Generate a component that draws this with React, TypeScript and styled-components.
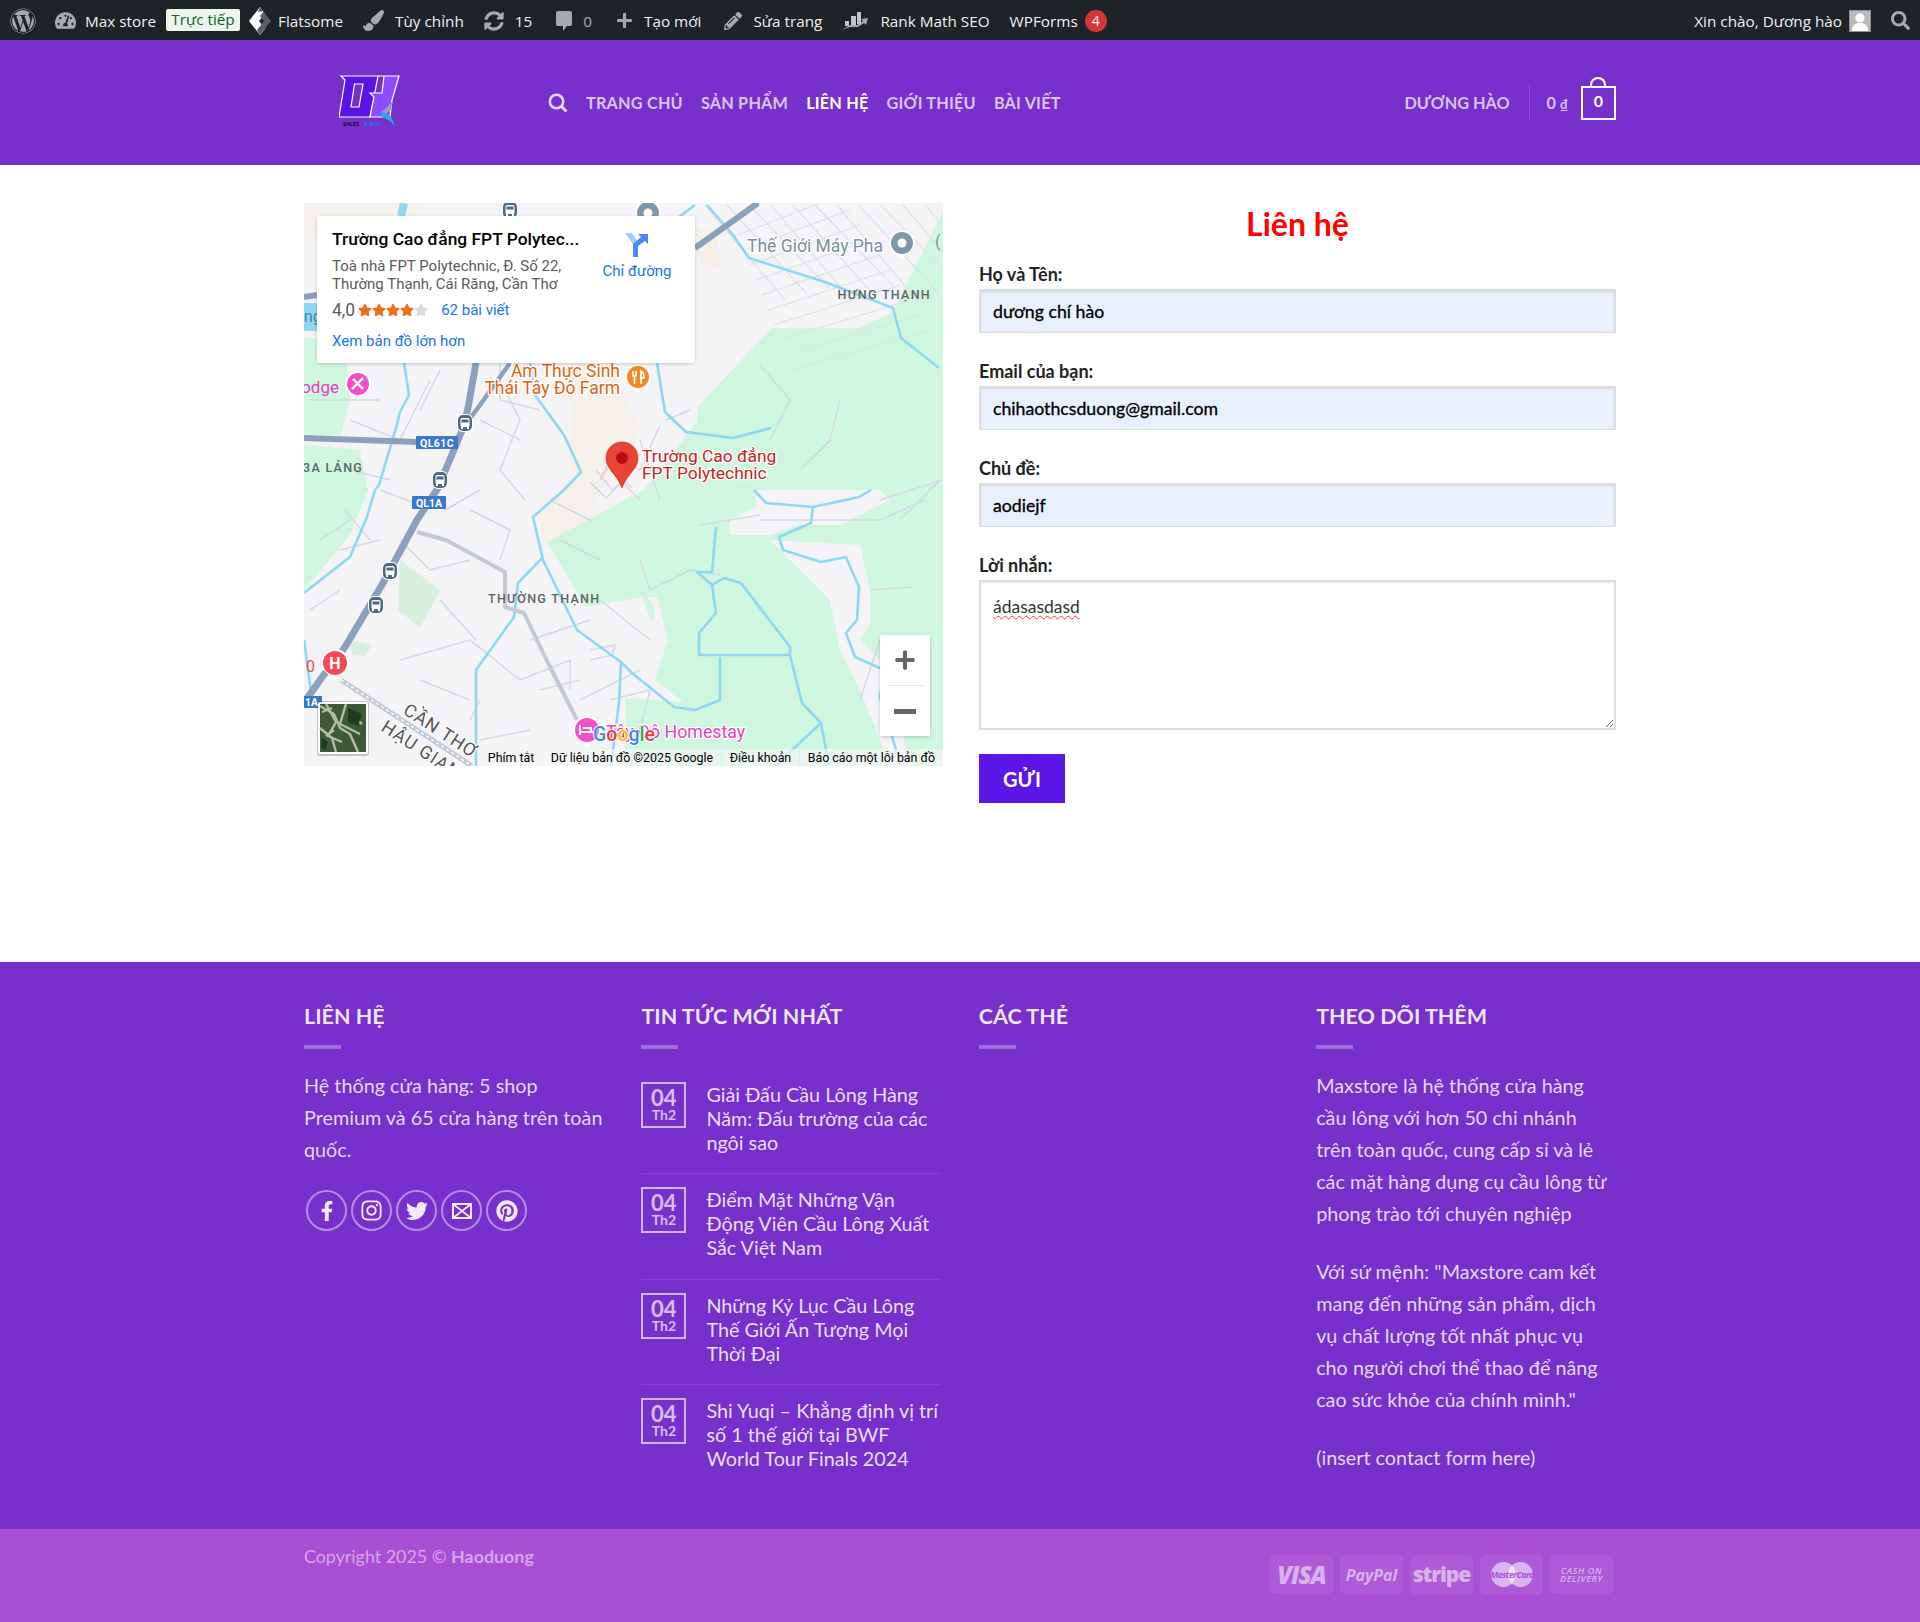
import React from 'react';
import styled, { createGlobalStyle } from 'styled-components';
import { FaFacebookF, FaInstagram, FaPinterest, FaPlus, FaSearch, FaStar, FaSyncAlt, FaTachometerAlt, FaTwitter, FaWordpress, FaPaintBrush, FaPencilAlt } from 'react-icons/fa';

const GlobalStyle = createGlobalStyle`
  html, body { margin: 0; padding: 0; background: #fff; }
  body { font-family: Lato, "Noto Sans", sans-serif; color: #333; }
  * { box-sizing: border-box; }
`;

const NEWS = [
  'Giải Đấu Cầu Lông Hàng Năm: Đấu trường của các ngôi sao',
  'Điểm Mặt Những Vận Động Viên Cầu Lông Xuất Sắc Việt Nam',
  'Những Kỷ Lục Cầu Lông Thế Giới Ấn Tượng Mọi Thời Đại',
  'Shi Yuqi – Khẳng định vị trí số 1 thế giới tại BWF World Tour Finals 2024',
];

const NAV = ['Trang chủ', 'Sản phẩm', 'Liên hệ', 'Giới thiệu', 'Bài viết'];

const RIVERS = [
  '564,490 533,517 543,560 577,630 621,662 619,703 611,766',
  '543,557 518,583 514,617 476,670 476,766',
  '754,490 766,503 813,507 859,497 871,490',
  '813,507 811,523 779,537 783,550 821,562 846,557 859,587 857,620 846,633 855,657 884,670 880,697 901,766',
  '716,527 712,572 697,572 712,585 716,613 699,633 699,655 790,655 790,647 741,583 724,578 712,585',
  '790,655 802,703 821,723 829,766',
  '720,657 720,700 695,710 674,707 632,673 621,662',
  '821,723 775,766',
  '657,363 665,412 686,432 733,438 771,428',
  '707,205 733,235 749,258 825,282 893,308 901,338 939,368',
  '530,363 535,395 564,435 581,472 564,490',
  '404,363 409,395 400,412 396,428 388,455 379,485 375,490 367,517 350,557 304,593',
  '304,640 312,700',
  '640,203 668,225 695,205',
];

const STREETS = [
  '660,425 640,470 612,455 600,480', '610,470 640,500', '620,450 600,480', '640,440 660,500',
  '596,470 612,490 630,475', '606,462 632,488', '590,482 606,498 622,482',
  '500,380 520,420 500,470 525,500', '480,420 520,440', '380,490 420,505', '400,540 430,570 470,560',
  '470,510 510,530 500,560', '440,600 476,640', '530,640 590,620', '520,680 570,660 570,690',
  '400,660 470,640 520,680', '470,700 420,680', '550,500 590,520', '560,540 600,560',
  '640,560 650,590 690,570 720,575', '840,400 830,440 800,470', '760,520 880,520 925,500',
  '870,590 913,587', '940,480 900,520', '760,365 790,400 770,440', '880,640 860,700', '580,700 640,670',
  '340,550 380,540', '345,510 370,540', '310,610 340,590', '430,380 400,440 350,420', '310,400 380,400',
  '480,740 530,730', '600,600 650,640', '590,650 615,645 612,655 590,660', '480,700 470,720',
  '440,370 420,410', '500,363 500,400 540,410', '350,470 390,480', '320,540 350,520', '445,510 480,490',
  '540,690 580,680', '610,700 650,690 640,730', '666,420 690,410', '700,525 760,515', '880,500 943,480',
];

// the dense street blocks of the town in the map's top right corner
const TOWN = Array.from({ length: 11 }, (_, i) => {
  const x = 705 + i * 22;
  return `${x},205 ${x + 80},${300 - (i % 3) * 6}`;
}).concat(
  Array.from({ length: 10 }, (_, i) => {
    const y = 235 + i * 15;
    return `${738 + i * 6},${y} ${840 + i * 10},${y - 40}`;
  }),
);

const BusPin: React.FC<{ x: number; y: number }> = ({ x, y }) => (
  <g transform={`translate(${x} ${y})`}>
    <rect x={-8} y={-9} width={16} height={18} rx={6} fill="#fff" />
    <rect x={-7} y={-8} width={14} height={16} rx={5} fill="#4f6a80" />
    <rect x={-4.5} y={-5} width={9} height={9} rx={1.5} fill="#fff" />
    <rect x={-3.5} y={-3.5} width={7} height={3} fill="#4f6a80" />
    <rect x={-4} y={4} width={2} height={2} fill="#fff" />
    <rect x={2} y={4} width={2} height={2} fill="#fff" />
  </g>
);

const CirclePin: React.FC<{ x: number; y: number; color: string; r?: number; children?: React.ReactNode }> = ({ x, y, color, r = 12, children }) => (
  <g transform={`translate(${x} ${y})`}>
    <path d={`M${-r - 2} 0a${r + 2} ${r + 2} 0 1 1 ${2 * r + 4} 0c0 ${r * 0.6} -${r * 0.6} ${r * 0.7} -${r + 2} ${r * 1.3 + 2}c-${r * 0.4} -${r * 0.6} -${r + 2} -${r * 0.7} -${r + 2} -${r * 1.3 + 2}z`} fill="#fff" />
    <circle r={r} fill={color} />
    {children}
  </g>
);

const MapDrawing = () => (
  <MapSvg viewBox="304 203 639 563" xmlns="http://www.w3.org/2000/svg">
    <rect x={304} y={203} width={639} height={563} fill="#f4f3f5" />
    <polygon points="695,228 716,232 722,270 700,262" fill="#f5f0e6" />
    <polygon points="304,203 420,203 400,240 304,240" fill="#f5f0e6" opacity={0.6} />
    <polygon points="570,363 610,363 640,430 600,490 585,520 545,545 535,510 570,480" fill="#f5f0e6" opacity={0.7} />
    <path d="M644,490 L697,422 L697,408 L771,328 L859,328 L893,312 L901,295 L926,245 L943,212 L943,766 L625,766 L625,698 L684,702 L644,672 L657,637 L642,597 L585,607 L564,570 L547,542 Z" fill="#cff6df" />
    <polygon points="304,338 345,338 350,400 341,435 304,435" fill="#cff6df" />
    <polygon points="304,445 360,450 368,490 350,535 304,590" fill="#cff6df" />
    <polygon points="400,560 440,590 420,628 398,610" fill="#d7f0dd" />
    <polygon points="350,640 372,645 365,656 352,655" fill="#d7f0dd" />
    <polygon points="754,490 880,490 890,500 840,525 790,525 760,520" fill="#f4f3f5" />
    <path d="M770,540 L860,545 L870,590 L870,625 L860,640 L885,665 L895,700 L910,766 L890,766 L860,690 L840,650 L830,600 L800,570 Z" fill="#f4f3f5" />
    <path d="M730,520 L760,505 L800,525 L770,535 L730,535 Z" fill="#f4f3f5" />
    <polygon points="655,610 648,597 657,597 668,640 655,680 640,680" fill="#f4f3f5" />
    {TOWN.map((s) => (
      <polyline key={s} points={s} fill="none" stroke="#dde1e9" strokeWidth={1.2} />
    ))}
    {STREETS.map((s) => (
      <polyline key={s} points={s} fill="none" stroke="#d3d9e3" strokeWidth={1.5} />
    ))}
    {RIVERS.map((s) => (
      <polyline key={s} points={s} fill="none" stroke="#8ed8f2" strokeWidth={2.6} strokeLinejoin="round" />
    ))}
    <rect x={304} y={303} width={14} height={28} fill="#8ed8f2" />
    <polyline points="304,297 317,295" fill="none" stroke="#8aa0bd" strokeWidth={6} />
    <polyline points="404,203 401,216" fill="none" stroke="#8ed8f2" strokeWidth={8} />
    <polyline points="417,532 446,540 505,572 505,607 524,613 548,663 577,720" fill="none" stroke="#c2cad6" strokeWidth={4} strokeLinejoin="round" />
    <polyline points="341,680 472,766" fill="none" stroke="#c2cad6" strokeWidth={5} />
    <polyline points="341,680 472,766" fill="none" stroke="#fff" strokeWidth={1.5} strokeDasharray="3 3" />
    <polyline points="758,203 695,248" fill="none" stroke="#8aa0bd" strokeWidth={6} />
    <polyline points="476,363 468,408 463,428 438,488 417,520 383,583 345,647 320,680 304,703" fill="none" stroke="#8aa0bd" strokeWidth={7} strokeLinejoin="round" />
    <polyline points="510,363 480,405 463,428" fill="none" stroke="#8aa0bd" strokeWidth={4.5} />
    <polyline points="304,438 417,442 451,443" fill="none" stroke="#8aa0bd" strokeWidth={6} />
    <rect x={416} y={436} width={42} height={13} rx={1} fill="#3a78c9" />
    <MapLabel x={437} y={446.5} fontSize={10.5} fontWeight={700} letterSpacing={0.4} fill="#fff" textAnchor="middle">QL61C</MapLabel>
    <rect x={412} y={496} width={34} height={13} rx={1} fill="#3a78c9" />
    <MapLabel x={429} y={506.5} fontSize={10.5} fontWeight={700} fill="#fff" textAnchor="middle">QL1A</MapLabel>
    <rect x={304} y={696} width={18} height={12} fill="#3a78c9" />
    <MapLabel x={305} y={706} fontSize={10.5} fontWeight={700} fill="#fff">1A</MapLabel>
    <BusPin x={510} y={210} />
    <BusPin x={465} y={423} />
    <BusPin x={440} y={480} />
    <BusPin x={390} y={571} />
    <BusPin x={376} y={605} />
    <CirclePin x={648} y={213} color="#7f98a8" r={11}><circle r={4.5} fill="#fff" /></CirclePin>
    <CirclePin x={902} y={243} color="#7f98a8" r={11}><circle r={4.5} fill="#fff" /></CirclePin>
    <CirclePin x={638} y={377} color="#f08a24" r={11}>
      <path d="M-5 -6v5h3v-5M-3.5 -1v8M3 7V-6c2 1 3 3 3 7H3" fill="none" stroke="#fff" strokeWidth={1.6} />
    </CirclePin>
    <CirclePin x={358} y={384} color="#f44fc8" r={11}>
      <path d="M-6 5L5 -6M-5 -5L5 5" stroke="#fff" strokeWidth={2.4} />
    </CirclePin>
    <CirclePin x={335} y={663} color="#ef4a5a" r={12}>
      <MapLabel x={0} y={6} fontSize={16} fontWeight={700} fill="#fff" textAnchor="middle">H</MapLabel>
    </CirclePin>
    <CirclePin x={587} y={730} color="#f44fc8" r={12}>
      <path d="M-7 -5v10M-7 2h14v3M-4 -2h8v4" stroke="#fff" strokeWidth={2} fill="none" />
    </CirclePin>
    <path d="M622 442c-9 0-16 7-16 16 0 11 11 16 16 30 5-14 16-19 16-30 0-9-7-16-16-16z" fill="#ea4335" stroke="#c5221f" strokeWidth={0.6} />
    <circle cx={622} cy={458} r={6} fill="#b31412" />
    <MapLabel x={883} y={252} fontSize={17.5} fill="#78909c" textAnchor="end" stroke="#fff" strokeWidth={2.4} paintOrder="stroke">Thế Giới Máy Pha</MapLabel>
    <MapLabel x={931} y={299} fontSize={12.5} fontWeight={500} letterSpacing={1.3} fill="#5f6368" textAnchor="end">HƯNG THẠNH</MapLabel>
    <MapLabel x={620} y={377} fontSize={17.5} fill="#d9650f" textAnchor="end" stroke="#fff" strokeWidth={2.4} paintOrder="stroke">Ẩm Thực Sinh</MapLabel>
    <MapLabel x={620} y={394} fontSize={17.5} fill="#d9650f" textAnchor="end" stroke="#fff" strokeWidth={2.4} paintOrder="stroke">Thái Tây Đô Farm</MapLabel>
    <MapLabel x={339} y={393} fontSize={17} fill="#e040c0" textAnchor="end">odge</MapLabel>
    <MapLabel x={642} y={462} fontSize={17.4} fill="#c5221f" stroke="#fff" strokeWidth={2.4} paintOrder="stroke">Trường Cao đẳng</MapLabel>
    <MapLabel x={642} y={479} fontSize={17.4} fill="#c5221f" stroke="#fff" strokeWidth={2.4} paintOrder="stroke">FPT Polytechnic</MapLabel>
    <MapLabel x={303} y={472} fontSize={12.5} fontWeight={500} letterSpacing={1.3} fill="#5f6368">3A LÁNG</MapLabel>
    <MapLabel x={488} y={603} fontSize={12.5} fontWeight={500} letterSpacing={1.3} fill="#5f6368">THƯỜNG THẠNH</MapLabel>
    <MapLabel x={306} y={672} fontSize={16} fill="#ef4a5a">0</MapLabel>
    <MapLabel x={935} y={247} fontSize={16} fill="#78909c">(</MapLabel>
    <MapLabel x={304} y={322} fontSize={16} fill="#2f8fa0">ng</MapLabel>
    <MapLabel transform="translate(402 713) rotate(33)" fontSize={18} letterSpacing={1} fill="#555" stroke="#fff" strokeWidth={2} paintOrder="stroke">CẦN THƠ</MapLabel>
    <MapLabel transform="translate(380 730) rotate(33)" fontSize={18} letterSpacing={1} fill="#555" stroke="#fff" strokeWidth={2} paintOrder="stroke">HẬU GIANG</MapLabel>
    <MapLabel x={606} y={738} fontSize={17.8} fill="#e83fbf" stroke="#fff" strokeWidth={2} paintOrder="stroke">Tây Đô Homestay</MapLabel>
    <MapLabel x={593} y={741} fontSize={19.5} fontWeight={500} stroke="#fff" strokeWidth={1.5} paintOrder="stroke">
      <tspan fill="#4285f4">G</tspan><tspan fill="#ea4335">o</tspan><tspan fill="#fbbc05">o</tspan><tspan fill="#4285f4">g</tspan><tspan fill="#34a853">l</tspan><tspan fill="#ea4335">e</tspan>
    </MapLabel>
    <rect x={317} y={701} width={52} height={55} rx={3} fill="#000" opacity={0.2} />
    <rect x={318} y={702} width={50} height={52} rx={2} fill="#fff" />
    <rect x={320} y={704} width={46} height={48} fill="#3d5a36" />
    <path d="M320 706l14 8 6 14 10 6 8 18M326 704l10 18-8 14 14 6M346 704l-6 20 20 10M320 728l12 10 4 14M322 712l10-4M334 730l-8 6M352 716l10 8" stroke="#b4bca3" strokeWidth={2.4} fill="none" />
    <path d="M348 708l14 6-4 12-10-4zM322 738l6 4-2 8-5-2z" fill="#1d3a1f" />
  </MapSvg>
);

const App = () => (
  <>
    <GlobalStyle />
    <AdminBar>
      <AdminGroup>
        <AdminItem><FaWordpress size={26} /></AdminItem>
        <AdminItem $left={9}><FaTachometerAlt size={21} /><span>Max store</span></AdminItem>
        <LiveBadge>Trực tiếp</LiveBadge>
        <AdminItem $left={8} $gap={6}>
          <svg width="24" height="30" viewBox="0 0 24 30">
            <path d="M12 1L1 15l11 14 5-6-6-8 6-7z" fill="#fff" />
            <path d="M12 1l11 14-11 14-3-5 7-9-4-5 4-5-6 1z" fill="#5b5f63" />
          </svg>
          <span>Flatsome</span>
        </AdminItem>
        <AdminItem $gap={11}><FaPaintBrush size={21} /><span>Tùy chỉnh</span></AdminItem>
        <AdminItem $gap={11}><FaSyncAlt size={20} /><span>15</span></AdminItem>
        <AdminItem $left={13} $gap={10}>
          <svg width="18" height="22" viewBox="0 0 18 22"><path d="M1 3a2 2 0 0 1 2-2h12a2 2 0 0 1 2 2v11a2 2 0 0 1-2 2h-3l-4 5v-5H3a2 2 0 0 1-2-2z" fill="#a7aaad" /></svg>
          <Muted>0</Muted>
        </AdminItem>
        <AdminItem $left={14} $gap={11}><FaPlus size={17} /><span>Tạo mới</span></AdminItem>
        <AdminItem $left={13} $gap={11}><FaPencilAlt size={18} /><span>Sửa trang</span></AdminItem>
        <AdminItem $gap={12}>
          <svg width="26" height="20" viewBox="0 0 26 20">
            <path d="M3 15h4V10H3zM9 14h5V5H9zM15 13h4V1h-4z" fill="#c3c4c7" />
            <path d="M0 19l8-3h8l6-4 2 2 2-7-7 1 2 2-6 4H8z" fill="#a7aaad" />
          </svg>
          <span>Rank Math SEO</span>
        </AdminItem>
        <AdminItem $gap={7}><span>WPForms</span><CountBadge>4</CountBadge></AdminItem>
      </AdminGroup>
      <AdminGroup>
        <AdminItem $gap={7}>
          <span>Xin chào, Dương hào</span>
          <Avatar>
            <svg width="20" height="20" viewBox="0 0 20 20">
              <circle cx="10" cy="7" r="4.6" fill="#fff" />
              <path d="M2 20c0-6 3-8 8-8s8 2 8 8z" fill="#fff" />
            </svg>
          </Avatar>
        </AdminItem>
        <AdminItem><FaSearch size={19} /></AdminItem>
      </AdminGroup>
    </AdminBar>

    <Header>
      <HeaderInner>
        <Logo viewBox="0 0 62 52" xmlns="http://www.w3.org/2000/svg">
          <polygon points="2,1 39,1 31,42 0,42 6,5" fill="#5a14e8" stroke="#fff" strokeWidth={1.2} />
          <polygon points="15.5,9 24,9 20,32 12,32" fill="#7830cc" stroke="#fff" strokeWidth={1.2} />
          <polygon points="39,1 60,1 53,25 51,42 31,42 35,22 31,18 43,18 45,1" fill="#8a4dff" stroke="#fff" strokeWidth={1.2} />
          <path d="M42 38l12-12-2 9-8 6z" fill="#9a9bb5" />
          <path d="M42 37c7 1 12 5 14 15-3-6-8-8-13-10z" fill="#2ea6dd" />
          <text x="4" y="51" fontFamily="Lato" fontSize="5.5" fontWeight="900" fill="#14082e">SALES</text>
          <text x="25" y="51" fontFamily="Lato" fontSize="5.5" fontWeight="900" fill="#2a7fd0">&amp; BUY</text>
        </Logo>
        <Nav>
          <SearchIcon width="20" height="20" viewBox="0 0 20 20">
            <circle cx="8.5" cy="8.5" r="6.7" fill="none" stroke="currentColor" strokeWidth="2.6" />
            <path d="M13.5 13.5L18.5 18.5" stroke="currentColor" strokeWidth="3" />
          </SearchIcon>
          {NAV.map((n) => (
            <NavLink key={n} $active={n === 'Liên hệ'}>{n}</NavLink>
          ))}
        </Nav>
        <Account>Dương Hào</Account>
        <Divider />
        <CartTotal>0 <small>₫</small></CartTotal>
        <Bag>
          <BagHandle />
          0
        </Bag>
      </HeaderInner>
    </Header>

    <Main>
      <MapFrame>
        <MapDrawing />
        <InfoCard>
          <CardInfo>
            <CardTitle>Trường Cao đẳng FPT Polytec...</CardTitle>
            <CardAddress>Toà nhà FPT Polytechnic, Đ. Số 22,<br />Thường Thạnh, Cái Răng, Cần Thơ</CardAddress>
            <Rating>
              <span>4,0</span>
              <Stars>
                {[1, 2, 3, 4, 5].map((i) => (
                  <FaStar key={i} size={14} color={i < 5 ? '#e7711b' : '#dadada'} />
                ))}
              </Stars>
              <CardLink>62 bài viết</CardLink>
            </Rating>
            <CardLink>Xem bản đồ lớn hơn</CardLink>
          </CardInfo>
          <Directions>
            <svg width="24" height="26" viewBox="0 0 24 26">
              <path d="M0 1h7l6 9v15H8V12z" fill="#a9c8fb" />
              <path d="M8 25V12L16 5l-3-3h10v10l-3-3-7 5v11z" fill="#4a8af4" />
            </svg>
            <CardLink>Chỉ đường</CardLink>
          </Directions>
        </InfoCard>
        <ZoomControl>
          <ZoomButton><FaPlus size={22} /></ZoomButton>
          <ZoomRule />
          <ZoomButton><MinusBar /></ZoomButton>
        </ZoomControl>
        <Attribution>
          <AttrText>Phím tắt</AttrText>
          <AttrText>Dữ liệu bản đồ ©2025 Google</AttrText>
          <AttrText>Điều khoản</AttrText>
          <AttrText>Báo cáo một lỗi bản đồ</AttrText>
        </Attribution>
      </MapFrame>

      <ContactForm>
        <FormTitle>Liên hệ</FormTitle>
        <Field>
          <Label>Họ và Tên:</Label>
          <Input defaultValue="dương chí hào" />
        </Field>
        <Field>
          <Label>Email của bạn:</Label>
          <Input defaultValue="chihaothcsduong@gmail.com" />
        </Field>
        <Field>
          <Label>Chủ đề:</Label>
          <Input defaultValue="aodiejf" />
        </Field>
        <Field>
          <Label>Lời nhắn:</Label>
          <MessageBox><Misspelled>ádasasdasd</Misspelled></MessageBox>
        </Field>
        <SubmitButton type="button">Gửi</SubmitButton>
      </ContactForm>
    </Main>

    <Footer>
      <FooterGrid>
        <div>
          <FooterHeading>Liên hệ</FooterHeading>
          <FooterText>Hệ thống cửa hàng: 5 shop Premium và 65 cửa hàng trên toàn quốc.</FooterText>
          <Socials>
            <SocialCircle><FaFacebookF size={20} /></SocialCircle>
            <SocialCircle><FaInstagram size={23} /></SocialCircle>
            <SocialCircle><FaTwitter size={22} /></SocialCircle>
            <SocialCircle>
              <svg width="20" height="16" viewBox="0 0 20 16">
                <rect x="1" y="1" width="18" height="14" fill="none" stroke="currentColor" strokeWidth="2" />
                <path d="M1 1l18 14M19 1L1 15" stroke="currentColor" strokeWidth="1.6" />
              </svg>
            </SocialCircle>
            <SocialCircle><FaPinterest size={22} /></SocialCircle>
          </Socials>
        </div>
        <div>
          <FooterHeading>Tin tức mới nhất</FooterHeading>
          {NEWS.map((title) => (
            <NewsItem key={title}>
              <DateBox><strong>04</strong><span>Th2</span></DateBox>
              <NewsTitle>{title}</NewsTitle>
            </NewsItem>
          ))}
        </div>
        <div>
          <FooterHeading>Các thẻ</FooterHeading>
        </div>
        <div>
          <FooterHeading>Theo dõi thêm</FooterHeading>
          <FooterText>Maxstore là hệ thống cửa hàng cầu lông với hơn 50 chi nhánh trên toàn quốc, cung cấp sỉ và lẻ các mặt hàng dụng cụ cầu lông từ phong trào tới chuyên nghiệp</FooterText>
          <FooterText>Với sứ mệnh: "Maxstore cam kết mang đến những sản phẩm, dịch vụ chất lượng tốt nhất phục vụ cho người chơi thể thao để nâng cao sức khỏe của chính mình."</FooterText>
          <FooterText>(insert contact form here)</FooterText>
        </div>
      </FooterGrid>
    </Footer>

    <BottomBar>
      <BottomInner>
        <Copyright>Copyright 2025 © <strong>Haoduong</strong></Copyright>
        <Payments>
          <PayCard><Visa>VISA</Visa></PayCard>
          <PayCard><PayPal>PayPal</PayPal></PayCard>
          <PayCard><Stripe>stripe</Stripe></PayCard>
          <PayCard>
            <MasterCard>
              <i /><i />
              <em>MasterCard</em>
            </MasterCard>
          </PayCard>
          <PayCard><Cash>CASH ON<br />DELIVERY</Cash></PayCard>
        </Payments>
      </BottomInner>
    </BottomBar>
  </>
);

const AdminBar = styled.div`
  height: 40px;
  background: #1d2327;
  display: flex;
  justify-content: space-between;
  font-family: 'Open Sans', sans-serif;
  font-size: 15.3px;
  color: #f0f0f1;
`;

const AdminGroup = styled.div`
  display: flex;
  align-items: center;
`;

const AdminItem = styled.div<{ $gap?: number; $left?: number }>`
  display: flex;
  align-items: center;
  gap: ${({ $gap }) => $gap ?? 9}px;
  padding: 1px 10px 0 ${({ $left }) => $left ?? 10}px;
  height: 40px;
  color: #f0f0f1;
  white-space: nowrap;

  svg {
    color: #a7aaad;
    flex: none;
  }
`;

const Muted = styled.span`
  color: #a7aaad;
`;

const LiveBadge = styled.span`
  width: 74px;
  height: 22px;
  line-height: 21px;
  text-align: center;
  background: #ecf6ec;
  color: #0b5d2c;
  border-radius: 2px;
  white-space: nowrap;
`;

const CountBadge = styled.span`
  width: 22px;
  height: 22px;
  line-height: 22px;
  border-radius: 50%;
  background: #d63638;
  color: #fff;
  text-align: center;
  font-size: 14px;
`;

const Avatar = styled.span`
  width: 22px;
  height: 22px;
  background: #b9b9b9;
  border: 1px solid #8c8f94;
  display: flex;
  align-items: flex-end;
  justify-content: center;
  overflow: hidden;

  svg {
    color: #fff;
  }
`;

const Header = styled.header`
  height: 125px;
  background: #7830cc;
`;

const HeaderInner = styled.div`
  width: 1312px;
  height: 100%;
  margin: 0 auto;
  display: flex;
  align-items: center;
  padding-left: 35px;
  color: rgba(255, 255, 255, 0.8);
`;

const Logo = styled.svg`
  width: 62px;
  height: 52px;
  flex: none;
  margin-bottom: 4px;
`;

const Nav = styled.nav`
  display: flex;
  align-items: center;
  gap: 18px;
  margin-left: 147px;
  flex: 1;
`;

const SearchIcon = styled.svg`
  color: rgba(255, 255, 255, 0.8);
`;

const NavLink = styled.a<{ $active?: boolean }>`
  font-size: 16.25px;
  font-weight: 700;
  letter-spacing: 0.2px;
  text-transform: uppercase;
  color: ${({ $active }) => ($active ? '#fff' : 'rgba(255, 255, 255, 0.72)')};
  white-space: nowrap;
`;

const Account = styled.span`
  font-size: 16.25px;
  font-weight: 700;
  text-transform: uppercase;
  color: rgba(255, 255, 255, 0.72);
`;

const Divider = styled.span`
  width: 1px;
  height: 37px;
  margin: 0 17px 0 19px;
  background: rgba(255, 255, 255, 0.15);
`;

const CartTotal = styled.span`
  font-size: 16.25px;
  font-weight: 700;
  color: rgba(255, 255, 255, 0.72);
  margin-right: 13px;

  small {
    font-size: 13px;
    text-decoration: underline;
  }
`;

const Bag = styled.span`
  position: relative;
  width: 35px;
  height: 34px;
  margin-top: 1px;
  border: 2.5px solid #fff;
  color: #fff;
  font-size: 16px;
  font-weight: 700;
  text-align: center;
  line-height: 25px;
`;

const BagHandle = styled.i`
  position: absolute;
  left: 7px;
  top: -11px;
  width: 16px;
  height: 9px;
  border: 2px solid #fff;
  border-bottom: 0;
  border-radius: 9px 9px 0 0;
`;

const Main = styled.main`
  width: 1312px;
  height: 797px;
  margin: 0 auto;
  padding-top: 38px;
  display: grid;
  grid-template-columns: 639px 1fr;
  column-gap: 36px;
  align-items: start;
`;

const MapFrame = styled.div`
  position: relative;
  height: 563px;
  overflow: hidden;
  font-family: Roboto, sans-serif;
`;

const MapSvg = styled.svg`
  display: block;
  width: 639px;
  height: 563px;
`;

const MapLabel = styled.text`
  font-family: Roboto, sans-serif;
`;

const InfoCard = styled.div`
  position: absolute;
  left: 13px;
  top: 13px;
  width: 378px;
  height: 147px;
  padding: 13px 15px;
  background: #fff;
  border-radius: 2px;
  box-shadow: rgba(0, 0, 0, 0.3) 0 1px 4px -1px;
  display: flex;
  justify-content: space-between;
`;

const CardInfo = styled.div`
  width: 260px;
`;

const CardTitle = styled.div`
  font-size: 17.4px;
  font-weight: 500;
  line-height: 20px;
  margin-bottom: 8px;
  color: #000;
  white-space: nowrap;
`;

const CardAddress = styled.div`
  font-size: 15px;
  line-height: 18px;
  color: #5b5b5b;
  white-space: nowrap;
`;

const Rating = styled.div`
  display: flex;
  align-items: center;
  margin-top: 7px;
  height: 20px;
  font-size: 17.5px;
  color: #5b5b5b;
`;

const Stars = styled.span`
  display: flex;
  margin: 0 13px 0 3px;
`;

const CardLink = styled.a`
  font-size: 15px;
  color: #1a73e8;
  white-space: nowrap;
  display: block;
  line-height: 20px;

  ${Rating} + & {
    margin-top: 11px;
  }
`;

const Directions = styled.div`
  width: 70px;
  margin-right: 8px;
  padding-top: 3px;
  display: flex;
  flex-direction: column;
  align-items: center;
  gap: 3px;
`;

const ZoomControl = styled.div`
  position: absolute;
  left: 576px;
  top: 432px;
  width: 50px;
  height: 101px;
  background: #fff;
  box-shadow: rgba(0, 0, 0, 0.3) 0 1px 4px -1px;
  display: flex;
  flex-direction: column;
  align-items: center;
`;

const ZoomButton = styled.div`
  flex: 1;
  width: 100%;
  display: flex;
  align-items: center;
  justify-content: center;
  color: #666;
`;

const ZoomRule = styled.div`
  width: 37px;
  height: 1px;
  background: #e6e6e6;
`;

const MinusBar = styled.i`
  width: 22px;
  height: 5px;
  background: #666;
`;

const Attribution = styled.div`
  position: absolute;
  right: 0;
  bottom: 0;
  height: 17px;
  display: flex;
  gap: 1px;
`;

const AttrText = styled.span`
  padding: 0 8px;
  margin-left: -0.5px;
  font-size: 12.4px;
  line-height: 17px;
  color: #000;
  background: rgba(245, 245, 245, 0.7);
  white-space: nowrap;
`;

const ContactForm = styled.form`
  display: block;
`;

const FormTitle = styled.h1`
  margin: 0 0 20px;
  height: 40px;
  font-size: 32px;
  line-height: 42px;
  font-weight: 700;
  text-align: center;
  color: #f00;
`;

const Field = styled.div`
  margin-bottom: 20px;
`;

const Label = styled.label`
  display: block;
  height: 24px;
  margin-top: -1px;
  margin-bottom: 3px;
  font-size: 18px;
  line-height: 24px;
  font-weight: 700;
  color: #222;
`;

const Input = styled.input`
  display: block;
  width: 100%;
  height: 44px;
  padding: 0 12px;
  background: #e8f0fe;
  border: 2px solid #ddd;
  border-bottom-width: 1.5px;
  box-shadow: inset 0 1px 2px rgba(0, 0, 0, 0.1);
  font-family: Lato, sans-serif;
  font-size: 17.7px;
  -webkit-text-stroke: 0.3px #000;
  color: #000;
  outline: none;
  margin-bottom: 27px;
`;

const MessageBox = styled.div`
  width: 100%;
  height: 150px;
  margin-top: 2px;
  padding: 13px 12px;
  border: 2px solid #ddd;
  box-shadow: inset 0 1px 2px rgba(0, 0, 0, 0.1);
  font-size: 17.5px;
  line-height: 24px;
  color: #333;
  overflow: auto;
  resize: vertical;
`;

const Misspelled = styled.span`
  text-decoration: underline wavy #f0312e 1px;
  text-underline-offset: 2px;
`;

const SubmitButton = styled.button`
  display: block;
  width: 86px;
  height: 49px;
  border: 0;
  background: #5b16e8;
  color: #fff;
  font-family: Lato, sans-serif;
  font-size: 20px;
  font-weight: 700;
  text-transform: uppercase;
  margin-top: 24px;
`;

const Footer = styled.footer`
  background: #7830cc;
  height: 567px;
  padding-top: 38px;
`;

const FooterGrid = styled.div`
  width: 1312px;
  margin: 0 auto;
  display: grid;
  grid-template-columns: repeat(4, 1fr);
  column-gap: 37.5px;
`;

const FooterHeading = styled.h3`
  position: relative;
  margin: 0 0 20px;
  height: 49px;
  font-size: 21.5px;
  line-height: 33px;
  font-weight: 700;
  text-transform: uppercase;
  color: rgba(255, 255, 255, 0.88);

  &::after {
    content: '';
    position: absolute;
    left: 0;
    bottom: 0;
    width: 37px;
    height: 4px;
    background: rgba(255, 255, 255, 0.3);
  }
`;

const FooterText = styled.p`
  margin: 0 0 26px;
  font-size: 19.8px;
  line-height: 32px;
  color: rgba(255, 255, 255, 0.82);
`;

const Socials = styled.div`
  display: flex;
  gap: 4px;
  padding-left: 2px;
  margin-top: -1px;
`;

const SocialCircle = styled.span`
  width: 41px;
  height: 41px;
  border: 2px solid rgba(255, 255, 255, 0.45);
  border-radius: 50%;
  display: flex;
  align-items: center;
  justify-content: center;
  color: rgba(255, 255, 255, 0.9);
`;

const NewsItem = styled.div`
  display: flex;
  gap: 20px;
  height: 105.4px;
  padding-top: 13px;
  border-bottom: 1px solid rgba(255, 255, 255, 0.1);

  &:last-child {
    border-bottom: 0;
  }
`;

const DateBox = styled.div`
  flex: none;
  width: 45px;
  height: 46px;
  border: 2px solid rgba(255, 255, 255, 0.65);
  color: rgba(255, 255, 255, 0.7);
  display: flex;
  flex-direction: column;
  align-items: center;

  strong {
    font-size: 22px;
    line-height: 22px;
    margin-top: 3px;
  }

  span {
    font-size: 14px;
    line-height: 12px;
    font-weight: 700;
  }
`;

const NewsTitle = styled.div`
  font-size: 19.8px;
  line-height: 24px;
  color: rgba(255, 255, 255, 0.85);
`;

const BottomBar = styled.div`
  height: 93px;
  background: #a84fd4;
`;

const BottomInner = styled.div`
  width: 1312px;
  margin: 0 auto;
  display: flex;
  justify-content: space-between;
`;

const Copyright = styled.div`
  margin-top: 14px;
  font-size: 17.85px;
  line-height: 26px;
  color: rgba(255, 255, 255, 0.5);
`;

const Payments = styled.div`
  display: flex;
  gap: 7px;
  margin: 26px 3px 0 0;
`;

const PayCard = styled.div`
  width: 63px;
  height: 39px;
  border-radius: 5px;
  background: rgba(255, 255, 255, 0.07);
  color: rgba(255, 255, 255, 0.55);
  display: flex;
  align-items: center;
  justify-content: center;
  text-align: center;
`;

const Visa = styled.span`
  font: italic 800 24px/1 'Open Sans', sans-serif;
  letter-spacing: -1px;
`;

const PayPal = styled.span`
  font: italic 700 16px/1 'Open Sans', sans-serif;
`;

const Stripe = styled.span`
  font: 800 21px/1 'Open Sans', sans-serif;
  letter-spacing: -1px;
`;

const MasterCard = styled.span`
  position: relative;
  width: 42px;
  height: 25px;
  display: block;

  i {
    position: absolute;
    top: 0;
    width: 25px;
    height: 25px;
    border-radius: 50%;
    background: rgba(255, 255, 255, 0.55);
  }

  i:first-child {
    left: 0;
  }

  i:nth-child(2) {
    right: 0;
  }

  em {
    position: absolute;
    left: 0;
    right: 0;
    top: 7px;
    font: italic 700 8.5px/11px 'Open Sans', sans-serif;
    letter-spacing: -0.4px;
    color: #a84fd4;
  }
`;

const Cash = styled.span`
  font: italic 600 9px/8px 'Open Sans', sans-serif;
  letter-spacing: 0.6px;
`;

export default App;
